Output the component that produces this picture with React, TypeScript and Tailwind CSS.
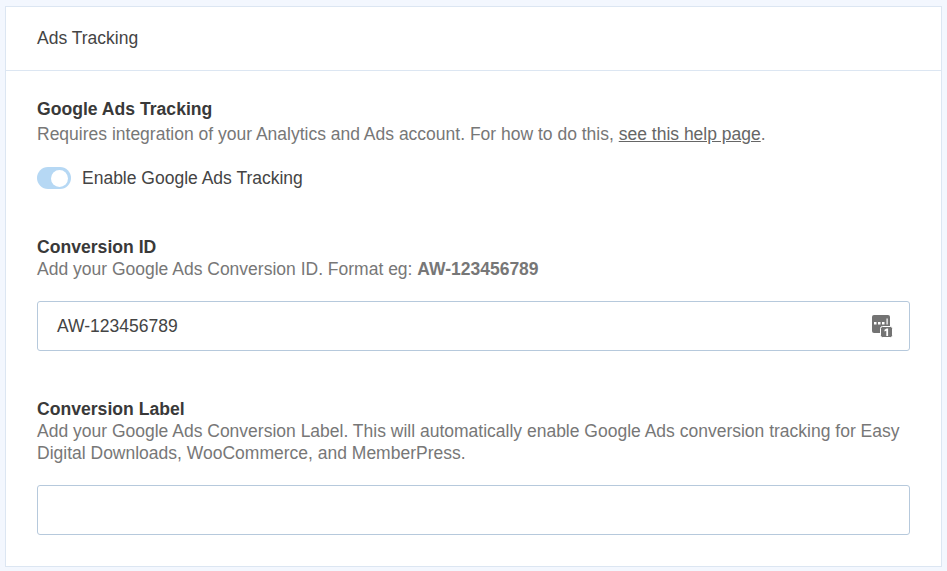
export default function App() {
  return (
    <div className="min-h-[571px] bg-[#f3f7fe] px-[5px] pt-[6px] pb-[4px] font-['Liberation_Sans',Arial,sans-serif]">
      <div className="h-[561px] border border-[#dce6f2] bg-white">
        <div className="flex h-[64px] items-center border-b border-[#dce6f2] pl-[31px] text-[17.5px] text-[#444444]">Ads Tracking</div>
        <div className="px-[31px]">
          <h2 className="mt-[26px] text-[17.6px] leading-[24px] font-bold text-[#393939]">Google Ads Tracking</h2>
          <p className="mt-[1px] text-[17.5px] leading-[24px] text-[#777777]">
            Requires integration of your Analytics and Ads account. For how to do this, <a className="text-[#666666] underline">see this help page</a>.
          </p>
          <div className="mt-[20px] flex h-[24px] items-center gap-[11px]">
            <span className="flex h-[22px] w-[34px] items-center justify-end rounded-full bg-[#b6d8f4] pr-[3px]">
              <span className="h-[17px] w-[17px] rounded-full bg-white"></span>
            </span>
            <span className="text-[17.5px] text-[#444444]">Enable Google Ads Tracking</span>
          </div>
          <h3 className="mt-[46px] text-[17.6px] leading-[22px] font-bold text-[#393939]">Conversion ID</h3>
          <p className="text-[17.5px] leading-[22px] text-[#777777]">Add your Google Ads Conversion ID. Format eg: <b>AW-123456789</b></p>
          <div className="mt-[21px] flex h-[50px] w-[873px] items-center justify-between rounded-[3px] border border-[#b6c9dc] pl-[19px] pr-[16px] text-[17.5px] text-[#444444]">
            <span>AW-123456789</span>
            <svg width="22" height="24" viewBox="0 0 22 24">
              <rect x="1" y="1" width="18" height="18" rx="2" fill="#737373" />
              <rect x="9.5" y="12.5" width="12" height="11" rx="2" fill="#737373" stroke="#fff" strokeWidth="1" />
              <path d="M3 8h2.5v2.5H3zM7 8h2.5v2.5H7zM11 8h2.5v2.5H11zM15.5 4.5h1.2v6h-1.2z" fill="#fff" />
              <path d="M13.5 15.8l2.2-1.3h1.4V22h-1.8v-5.2l-1.8.8z" fill="#fff" />
            </svg>
          </div>
          <h3 className="mt-[47px] text-[17.6px] leading-[22px] font-bold text-[#393939]">Conversion Label</h3>
          <p className="text-[17.5px] leading-[22px] text-[#777777]">Add your Google Ads Conversion Label. This will automatically enable Google Ads conversion tracking for Easy Digital Downloads, WooCommerce, and MemberPress.</p>
          <div className="mt-[21px] h-[50px] w-[873px] rounded-[3px] border border-[#b6c9dc]"></div>
        </div>
      </div>
    </div>
  );
}
